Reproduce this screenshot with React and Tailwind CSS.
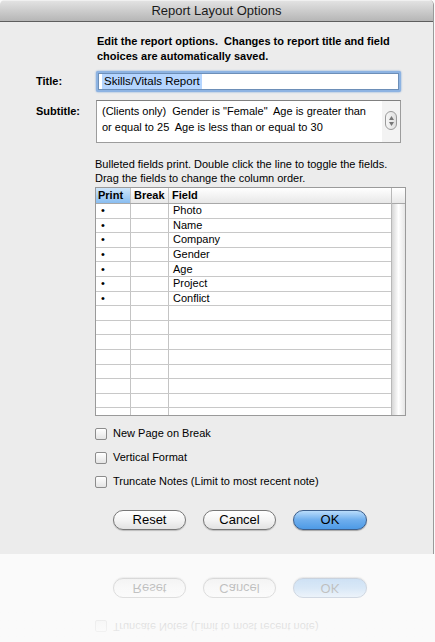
const fields = ['Photo', 'Name', 'Company', 'Gender', 'Age', 'Project', 'Conflict'];
const rows = Array.from({ length: 15 }, (_, i) => fields[i] || '');

const font = { fontFamily: '"Liberation Sans", Arial, sans-serif' };

function Checkbox({ label }) {
  return (
    <div className="flex items-center gap-[6px] h-[13px]">
      <div className="w-[12px] h-[12px] rounded-[2px] border border-[#8c8c8c] bg-gradient-to-b from-white to-[#e4e4e4] shadow-[inset_0_1px_0_#fff]" />
      <span className="text-[11px] text-black leading-none whitespace-nowrap">{label}</span>
    </div>
  );
}

function PillButton({ children, primary }) {
  return (
    <div
      className={
        primary
          ? 'w-[74px] h-[20px] rounded-full border border-[#3d5f8c] bg-gradient-to-b from-[#b9dcfb] via-[#6eaeed] to-[#4d9ae6] flex items-center justify-center text-[13px] text-black shadow-[0_1px_1px_rgba(0,0,0,0.3)]'
          : 'w-[73px] h-[20px] rounded-full border border-[#777] bg-gradient-to-b from-white via-[#f4f4f4] to-[#e2e2e2] flex items-center justify-center text-[13px] text-black shadow-[0_1px_1px_rgba(0,0,0,0.2)]'
      }
    >
      {children}
    </div>
  );
}

function Buttons() {
  return (
    <div className="flex pl-[113px] gap-[17px] mt-[22px] mb-[24px]">
      <PillButton>Reset</PillButton>
      <PillButton>Cancel</PillButton>
      <PillButton primary>OK</PillButton>
    </div>
  );
}

export default function App() {
  return (
    <div className="w-[435px] h-[642px] bg-[#fafafa] overflow-hidden" style={font}>
      {/* Window */}
      <div className="w-[434px] bg-[#ececec] border-r border-[#9a9a9a] rounded-t-[5px] overflow-hidden">
        {/* Title bar */}
        <div className="h-[22px] bg-gradient-to-b from-[#e2e2e2] to-[#b6b6b6] border-b border-[#5e5e5e] border-t border-t-[#f0f0f0] flex items-center justify-center">
          <span className="text-[13px] text-[#1a1a1a]">Report Layout Options</span>
        </div>

        {/* Description */}
        <div className="pl-[97px] pt-[12px] text-[11px] font-bold leading-[15px] text-black whitespace-nowrap">
          <p>Edit the report options.&nbsp; Changes to report title and field</p>
          <p>choices are automatically saved.</p>
        </div>

        {/* Title */}
        <div className="flex items-center mt-[7px]">
          <div className="w-[96px] pl-[36px] text-[11px] font-bold">Title:</div>
          <div className="w-[305px] h-[21px] rounded-[2px] bg-[#8db3e2] p-[2px] shadow-[0_0_2px_#6d9bd4]">
            <div className="w-full h-full bg-white border border-[#6d8fb8] flex items-center pl-[3px]">
              <span className="bg-[#b5d5ff] text-[11.5px] leading-[15px] px-[2px]">Skills/Vitals Report</span>
            </div>
          </div>
        </div>

        {/* Subtitle */}
        <div className="flex items-start mt-[8px]">
          <div className="w-[96px] pl-[36px] pt-[3px] text-[11px] font-bold">Subtitle:</div>
          <div className="w-[305px] h-[43px] border border-[#9c9c9c] border-t-[#808080] bg-white flex">
            <div className="flex-1 pl-[5px] pt-[2px] text-[11px] leading-[16px] text-black whitespace-nowrap">
              <p>(Clients only)&nbsp; Gender is "Female"&nbsp; Age is greater than</p>
              <p>or equal to 25&nbsp; Age is less than or equal to 30</p>
            </div>
            <div className="w-[18px] bg-[#f3f3f3] flex justify-center pt-[10px]">
              <div className="w-[12px] h-[19px] rounded-full border border-[#9a9a9a] bg-gradient-to-r from-[#f6f6f6] to-[#e0e0e0] flex flex-col items-center justify-center gap-[2px]">
                <svg width="5" height="4" viewBox="0 0 5 4"><path d="M2.5 0L5 4H0z" fill="#777" /></svg>
                <svg width="5" height="4" viewBox="0 0 5 4"><path d="M0 0H5L2.5 4z" fill="#777" /></svg>
              </div>
            </div>
          </div>
        </div>

        {/* Help text */}
        <div className="pl-[95px] mt-[14px] text-[11px] leading-[14px] text-black whitespace-nowrap">
          <p>Bulleted fields print. Double click the line to toggle the fields.</p>
          <p>Drag the fields to change the column order.</p>
        </div>

        {/* Table */}
        <div className="ml-[95px] mt-[2px] w-[311px] h-[229px] border border-[#9a9a9a] bg-white flex overflow-hidden">
          <div className="flex-1 flex flex-col">
            <div className="h-[16px] shrink-0 flex border-b border-[#a8a8a8] bg-gradient-to-b from-white to-[#e8e8e8] text-[11px] font-bold leading-none">
              <div className="w-[35px] border-r border-[#c4c4c4] bg-gradient-to-b from-[#cfe6fb] to-[#89bdf0] flex items-center pl-[2px]">Print</div>
              <div className="w-[38px] border-r border-[#c4c4c4] flex items-center pl-[3px]">Break</div>
              <div className="flex-1 flex items-center pl-[3px]">Field</div>
            </div>
            {rows.map((f, i) => (
              <div key={i} className="h-[14.6px] shrink-0 flex border-b border-[#c8c8c8] text-[11px] leading-none">
                <div className="w-[35px] border-r border-[#c4c4c4] flex items-center pl-[5px]">{f ? '•' : ''}</div>
                <div className="w-[38px] border-r border-[#c4c4c4]" />
                <div className="flex-1 flex items-center pl-[4px]">{f}</div>
              </div>
            ))}
          </div>
          <div className="w-[14px] flex flex-col border-l border-[#b8b8b8]">
            <div className="h-[16px] shrink-0 border-b border-[#a8a8a8] bg-gradient-to-b from-white to-[#e8e8e8]" />
            <div className="flex-1 bg-gradient-to-r from-[#d6d6d6] via-white to-[#e6e6e6]" />
          </div>
        </div>

        {/* Options */}
        <div className="pl-[95px] flex flex-col gap-[11px] pt-[11px]">
          <Checkbox label="New Page on Break" />
          <Checkbox label="Vertical Format" />
          <Checkbox label="Truncate Notes (Limit to most recent note)" />
        </div>
        <Buttons />
      </div>

      {/* Reflection of the window's bottom edge */}
      <div className="relative h-[89px] overflow-hidden">
        <div className="flex flex-col -scale-y-100 opacity-30">
          <div className="pl-[95px]">
            <Checkbox label="Truncate Notes (Limit to most recent note)" />
          </div>
          <Buttons />
        </div>
        <div className="absolute inset-0 bg-gradient-to-b from-transparent via-[#fafafa]/30 to-[#fafafa]/90" />
      </div>
    </div>
  );
}
